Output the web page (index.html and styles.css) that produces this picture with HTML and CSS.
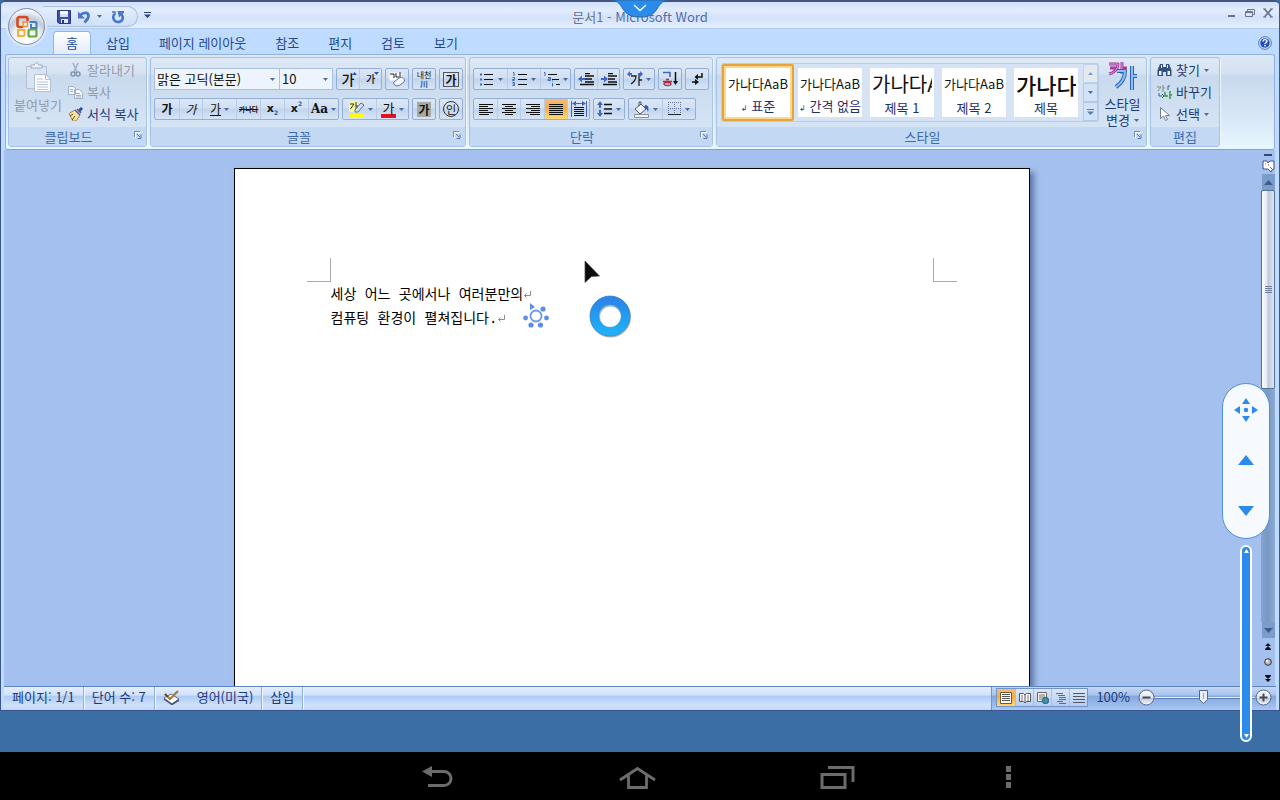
FILE: index.html
```html
<!DOCTYPE html>
<html lang="ko">
<head>
<meta charset="utf-8">
<title>문서1 - Microsoft Word</title>
<link rel="stylesheet" href="styles.css">
</head>
<body>
<svg class="defs" aria-hidden="true">
  <defs>
    <symbol id="caret" viewBox="0 0 5 3"><path d="M0 0h5L2.5 3z" fill="#4a6ca3"/></symbol>
    <symbol id="launch" viewBox="0 0 8 8"><path d="M.5 6V.5H6" fill="none" stroke="#6b8cbd"/><path d="M3 3l3 3M7 3.500v4H3.500" fill="none" stroke="#5577aa"/><path d="M1.500 7V1.500H7" fill="none" stroke="#fff"/></symbol>
    <linearGradient id="steel" x1="0" y1="0" x2="0" y2="1"><stop offset="0" stop-color="#fff"/><stop offset=".5" stop-color="#dfe4ee"/><stop offset=".55" stop-color="#bfc8da"/><stop offset="1" stop-color="#f8fbff"/></linearGradient>
    <linearGradient id="sky" x1="0" y1="0" x2="0" y2="1"><stop offset="0" stop-color="#2a86ea"/><stop offset="1" stop-color="#1fb0f8"/></linearGradient>
  </defs>
</svg>

<div class="window">
  <header class="titlebar">
    <div class="title-left">
      <div class="quick">
        <button class="plain" aria-label="저장"><svg width="14" height="14" viewBox="0 0 14 14"><path d="M.5.500h13v13H2l-1.500-1.500z" fill="#3f4fa8" stroke="#2b3585"/><path d="M3 1h8v6H3z" fill="#f4f8ff"/><path d="M3 4h8v3H3z" fill="#cfe0f8"/><path d="M4 9h7v4H4z" fill="#e4e8f4"/><path d="M5 10h2v3H5z" fill="#2b3585"/></svg></button>
        <button class="plain" aria-label="실행 취소"><svg width="14" height="14" viewBox="0 0 14 14"><path d="M3.500 5C7 1.500 12 2.500 11.500 6.500c-.3 2.500-2 4-4 6" fill="none" stroke="#4a76cc" stroke-width="2.800"/><path d="M1 1.500v7h7z" fill="#4a76cc"/></svg></button>
        <button class="plain undo-list" aria-label="실행 취소 목록"><svg class="caret"><use href="#caret"/></svg></button>
        <button class="plain" aria-label="다시 실행"><svg width="14" height="14" viewBox="0 0 14 14"><path d="M3.500 4C1 7 2.500 12 7 12s6-4.500 3.500-7.500" fill="none" stroke="#4a76cc" stroke-width="2.600"/><path d="M6.500 1H13v1.500L8 7.500z" fill="#4a76cc"/><path d="M1 2h3v3" fill="none" stroke="#4a76cc" stroke-width="1.500"/></svg></button>
      </div>
      <button class="plain" aria-label="빠른 실행 도구 모음 사용자 지정"><svg width="7" height="6" viewBox="0 0 7 6"><path d="M0 0h7v1H0zM0 2.500h7L3.500 6z" fill="#28457d"/></svg></button>
    </div>
    <h1 class="title">문서1 - <span>Microsoft Word</span></h1>
    <div class="title-right">
      <button class="plain" aria-label="최소화"><svg width="10" height="10" viewBox="0 0 10 10"><path d="M1 7h7v2H1z" fill="#68758c"/></svg></button>
      <button class="plain" aria-label="이전 크기로"><svg width="10" height="10" viewBox="0 0 10 10"><path d="M2.500 3V1.500h7v5H8M.5 3.500h7v5h-7zM.5 4.500h7" fill="none" stroke="#68758c"/></svg></button>
      <button class="plain" aria-label="닫기"><svg width="10" height="10" viewBox="0 0 10 10"><path d="M1.500 1l7 8M8.500 1l-7 8" stroke="#68758c" stroke-width="1.800"/><path d="M0 1h3M7 1h3M0 9h3M7 9h3" stroke="#68758c"/></svg></button>
    </div>
  </header>
  <button class="office" aria-label="Office 단추"><svg width="24" height="24" viewBox="0 0 24 24" fill="none" stroke-width="2.600"><path d="M12.500 6V4a2 2 0 0 0-2-2H4.500a2 2 0 0 0-2 2v6a2 2 0 0 0 2 2H8" stroke="#d9481c"/><path d="M8 7h4.500v4.500H8z" stroke="#f0913a" stroke-width="1.500"/><path d="M14.500 7H20a1.500 1.500 0 0 1 1.500 1.500V13H16V9" stroke="#3b7ec8" stroke-width="2"/><path d="M9 15H3v6h5a1.500 1.500 0 0 0 1.500-1.500V14" stroke="#f2b233" stroke-width="2"/><rect x="13.500" y="14.500" width="8" height="7" rx="1.500" stroke="#69a93c" stroke-width="2.200"/></svg></button>

  <nav class="tabs" aria-label="리본 탭">
    <button class="tab active">홈</button>
    <button class="tab">삽입</button>
    <button class="tab">페이지 레이아웃</button>
    <button class="tab">참조</button>
    <button class="tab">편지</button>
    <button class="tab">검토</button>
    <button class="tab">보기</button>
    <button class="plain help" aria-label="도움말"><svg width="14" height="14" viewBox="0 0 14 14"><circle cx="7" cy="7" r="6.300" fill="#e8f2ff" stroke="#4a6eb8"/><circle cx="7" cy="7" r="4.800" fill="#2350c0"/><path d="M5 5.500C5 3 9 3 9 5.300 9 6.500 7 6.500 7 8.200M7 9v1.600" fill="none" stroke="#fff" stroke-width="1.400"/></svg></button>
  </nav>

  <div class="ribbon">
    <section class="group clipboard">
      <div class="body">
        <button class="paste off"><svg width="28" height="31" viewBox="0 0 28 31"><path d="M2.500 4.500h20v22h-20z" fill="#d9e3f1" stroke="#b4c1d4"/><path d="M7 6V3h3.500c0-3 4-3 4 0H18v3z" fill="#eef3fa" stroke="#9eabc0"/><path d="M10.500 12.500h11l5 5v12h-16z" fill="#fafcff" stroke="#b4c1d4"/><path d="M21.500 12.500v5h5M13 20h11M13 22.500h11M13 25h11M13 27.500h11M13 17h6" fill="none" stroke="#b9c7da"/></svg><span>붙여넣기</span><svg class="caret faded"><use href="#caret"/></svg></button>
        <div class="stack">
          <button class="line off"><svg width="15" height="14" viewBox="0 0 15 14"><path d="M5 0l4 9M10 0L6 9" stroke="#9fb0c8" stroke-width="1.600"/><circle cx="5" cy="11" r="2" fill="none" stroke="#8294b4" stroke-width="1.500"/><circle cx="10" cy="11" r="2" fill="none" stroke="#8294b4" stroke-width="1.500"/></svg>잘라내기</button>
          <button class="line off"><svg width="15" height="14" viewBox="0 0 15 14"><path d="M.5 1.500h5l2 2v6h-7z M6.500 4.500h5l3 3v6h-8z" fill="#f6f9fd" stroke="#a1b0c6"/><path d="M2 4.500h3M2 6.500h3M8 8.500h4M8 10.500h5M8 12h5" stroke="#a1b0c6"/></svg>복사</button>
          <button class="line"><svg width="15" height="14" viewBox="0 0 15 14"><path d="M10 3l3-3 2 1.500-3 4z" fill="#274f9c"/><path d="M1 6.500L7 3l5 5-4 6H5z" fill="#f6e3a5" stroke="#b48a34"/><path d="M7 3l5 5M9 2l4 4" stroke="#5a5a8c" stroke-width="1.500"/><path d="M4 13l3-4M2 9l3-2" stroke="#5c4620"/></svg>서식 복사</button>
        </div>
      </div>
      <footer class="opts">클립보드<button class="launch" aria-label="클립보드 옵션"><svg width="8" height="8"><use href="#launch"/></svg></button></footer>
    </section>

    <section class="group font">
      <div class="body rows">
        <div class="row">
          <div class="combos">
            <label class="combo face"><select aria-label="글꼴"><option>맑은 고딕(본문)</option></select><svg class="caret"><use href="#caret"/></svg></label>
            <label class="combo size"><select aria-label="글꼴 크기"><option>10</option></select><svg class="caret"><use href="#caret"/></svg></label>
          </div>
          <div class="strip"><button class="w22" aria-label="글꼴 크게"><b class="ko14">가</b><svg class="tick" width="5" height="3" viewBox="0 0 5 3"><path d="M0 3h5L2.500 0z" fill="#2d57a5"/></svg></button><button class="w22" aria-label="글꼴 작게"><b class="ko10">가</b><svg class="tick" width="5" height="3" viewBox="0 0 5 3"><path d="M0 0h5L2.500 3z" fill="#2d57a5"/></svg></button></div>
          <div class="strip"><button class="w22" aria-label="서식 지우기"><svg width="18" height="18" viewBox="0 0 18 18"><path d="M1.500 2.500h12v8h-12z" fill="#fff"/><path d="M2 4h4v4M8 3v4h3M12 2v6" fill="none" stroke="#222"/><path d="M6 12l5-4c3-2 7 1 5 4l-4 3c-3 2-8 0-6-3z" fill="#f3f5ff" stroke="#6575a5"/></svg></button></div>
          <div class="strip"><button class="w22 ruby" aria-label="윗주 달기"><span>내천</span><b>川</b></button></div>
          <div class="strip"><button class="w22" aria-label="문자 테두리"><b class="boxed">가</b></button></div>
        </div>
        <div class="row">
          <div class="strip"><button class="w24" aria-label="굵게"><b class="ko12">가</b></button><button class="w23" aria-label="기울임꼴"><i class="ko12">가</i></button><button class="w34" aria-label="밑줄"><u class="ko12">가</u><svg class="caret"><use href="#caret"/></svg></button><button class="w24" aria-label="취소선"><s>가나다</s></button><button class="w24" aria-label="아래 첨자"><b class="math">x<sub>2</sub></b></button><button class="w24" aria-label="위 첨자"><b class="math">x<sup>2</sup></b></button><button class="w30" aria-label="대/소문자 바꾸기"><b class="case">Aa</b><svg class="caret"><use href="#caret"/></svg></button></div>
          <div class="strip"><button class="w33" aria-label="강조 색"><svg width="18" height="18" viewBox="0 0 18 18"><path d="M2 1h9v11H2z" fill="#f8f68c"/><path d="M3 4h4L3.500 9M9 2v8M9 6h2" fill="none" stroke="#333"/><path d="M8 10l6-7 3 2-6 7H8z" fill="#dae4f5" stroke="#5a6b96"/><path d="M2 14h15v4H2z" fill="#ffff00"/></svg><svg class="caret"><use href="#caret"/></svg></button><button class="w32" aria-label="글꼴 색"><span class="colored">가</span><svg class="caret"><use href="#caret"/></svg></button></div>
          <div class="strip"><button class="w22" aria-label="문자 음영"><b class="shaded">가</b></button></div>
          <div class="strip"><button class="w22" aria-label="원 문자"><span class="circled">인</span></button></div>
        </div>
      </div>
      <footer class="opts">글꼴<button class="launch" aria-label="글꼴 옵션"><svg width="8" height="8"><use href="#launch"/></svg></button></footer>
    </section>

    <section class="group para">
      <div class="body rows">
        <div class="row">
          <div class="strip"><button class="w33" aria-label="글머리 기호"><svg width="16" height="14" viewBox="0 0 16 14"><path d="M5 2.500h9M5 7.500h9M5 12.500h9" stroke="#111"/><path d="M1 1.500h2v2H1zM1 6.500h2v2H1zM1 11.500h2v2H1z" fill="#4267b4"/></svg><svg class="caret"><use href="#caret"/></svg></button><button class="w33" aria-label="번호 매기기"><svg width="16" height="14" viewBox="0 0 16 14"><path d="M6 2.500h9M6 7.500h9M6 12.500h9" stroke="#111"/><path d="M1 .500h1V4M.5 5.500h2v2h-2v1h2M.5 10.500h2v3h-2M.5 12h2" fill="none" stroke="#4267b4"/></svg><svg class="caret"><use href="#caret"/></svg></button><button class="w30" aria-label="다단계 목록"><svg width="17" height="15" viewBox="0 0 17 15"><path d="M5 2.500h9M9 7.500h7M13 12.500h4" stroke="#111"/><path d="M1 .500h1V4M5 5.500h2.500v3H5V7h2M9.500 11v3.500M9.500 8.500v1" fill="none" stroke="#4267b4"/></svg><svg class="caret"><use href="#caret"/></svg></button></div>
          <div class="strip"><button class="w22" aria-label="내어쓰기"><svg width="16" height="13" viewBox="0 0 16 13"><path d="M7 .500h5M7 3h9M7 6h7M7 9h9M2 11.500h14" stroke="#111" stroke-width="1.600"/><path d="M0 6l4-3.500V5h3v2H4v2.500z" fill="#3f68c8"/></svg></button><button class="w22" aria-label="들여쓰기"><svg width="16" height="13" viewBox="0 0 16 13"><path d="M7 .500h5M7 3h9M7 6h7M7 9h9M2 11.500h14" stroke="#111" stroke-width="1.600"/><path d="M7 6L3 2.500V5H0v2h3v2.500z" fill="#3f68c8"/></svg></button></div>
          <div class="strip"><button class="w30" aria-label="문자 배열"><svg width="16" height="16" viewBox="0 0 16 16"><path d="M4 5h5c0 3-2 6-5 8M12 3v12M12 9h3" fill="none" stroke="#222" stroke-width="1.300"/><path d="M0 3l3-3v2h2v2H3v2zM16 3l-3-3v2h-2v2h2v2z" fill="#3f68c8"/></svg><svg class="caret"><use href="#caret"/></svg></button></div>
          <div class="strip"><button class="w22" aria-label="정렬"><svg width="17" height="16" viewBox="0 0 17 16"><path d="M1 1.500h7V6" fill="none" stroke="#4267b4" stroke-width="1.600"/><path d="M4 8.500h3M1 10.500h9" stroke="#b02a38" stroke-width="1.500"/><ellipse cx="5.500" cy="13" rx="3.500" ry="1.500" fill="none" stroke="#b02a38" stroke-width="1.300"/><path d="M13.500 1v11" stroke="#111" stroke-width="1.500"/><path d="M11 10h5l-2.500 4z" fill="#111"/></svg></button></div>
          <div class="strip"><button class="w22" aria-label="편집 기호 표시"><svg width="13" height="14" viewBox="0 0 13 14"><path d="M11 1v4H6M1 10h4" fill="none" stroke="#111" stroke-width="1.500"/><path d="M7 2v6L3.500 5zM4 7v6l4-3z" fill="#111"/></svg></button></div>
        </div>
        <div class="row">
          <div class="strip"><button class="w23" aria-label="왼쪽 맞춤"><svg width="14" height="11" viewBox="0 0 14 11"><path d="M0 .500h14M0 2.500h9M0 4.500h14M0 6.500h9M0 8.500h14M0 10.500h10" stroke="#111"/></svg></button><button class="w23" aria-label="가운데 맞춤"><svg width="14" height="11" viewBox="0 0 14 11"><path d="M0 .500h14M3 2.500h8M0 4.500h14M3 6.500h8M0 8.500h14M3 10.500h8" stroke="#111"/></svg></button><button class="w24" aria-label="오른쪽 맞춤"><svg width="14" height="11" viewBox="0 0 14 11"><path d="M0 .500h14M5 2.500h9M0 4.500h14M5 6.500h9M0 8.500h14M4 10.500h10" stroke="#111"/></svg></button><button class="w23 on" aria-label="양쪽 맞춤"><svg width="14" height="11" viewBox="0 0 14 11"><path d="M0 .500h14M0 2.500h14M0 4.500h14M0 6.500h14M0 8.500h14M0 10.500h14" stroke="#111"/></svg></button><button class="w22" aria-label="균등 분할"><svg width="16" height="16" viewBox="0 0 16 16"><path d="M3 6.500h10M3 8.500h10M3 10.500h10M3 12.500h10M3 14.500h10" stroke="#111"/><path d="M.5 0v16M15.500 0v16M4 2.500h8" stroke="#4267b4"/><path d="M1 2.500l4-2.500v5zM15 2.500l-4-2.500v5z" fill="#4267b4"/></svg></button></div>
          <div class="strip"><button class="w30" aria-label="줄 간격"><svg width="16" height="16" viewBox="0 0 16 16"><path d="M7 3.500h8M7 8h8M7 12.500h8" stroke="#111" stroke-width="1.300"/><path d="M3 0l3 4H4v3H2V4H0zM3 16l3-4H4V9H2v3H0z" fill="#4267b4"/></svg><svg class="caret"><use href="#caret"/></svg></button></div>
          <div class="strip"><button class="w33" aria-label="음영"><svg width="17" height="17" viewBox="0 0 17 17"><path d="M2 8l6-5 5 5-6 5z" fill="#eef4fc" stroke="#4a5878"/><path d="M6 5V1h2v3" fill="none" stroke="#4a5878"/><path d="M12 4c4 0 4 4 3 7-1-3-2-4-4-4z" fill="#2f5cb8"/><path d="M1.500 13.500h14v3h-14z" fill="#f5f7fc" stroke="#8a8f9c"/></svg><svg class="caret"><use href="#caret"/></svg></button><button class="w33" aria-label="테두리"><svg width="14" height="14" viewBox="0 0 14 14"><path d="M.5 0v13M6.500 0v13M12.500 0v13M0 .500h13M0 6.500h13" stroke="#66759a" stroke-dasharray="1 1"/><path d="M0 12.500h13" stroke="#222"/></svg><svg class="caret"><use href="#caret"/></svg></button></div>
        </div>
      </div>
      <footer class="opts">단락<button class="launch" aria-label="단락 옵션"><svg width="8" height="8"><use href="#launch"/></svg></button></footer>
    </section>

    <section class="group styles">
      <div class="body">
        <div class="gallery">
          <button class="style sel"><span class="sample">가나다AaBb</span><span class="name"><small>↲</small> 표준</span></button>
          <button class="style"><span class="sample">가나다AaBb</span><span class="name"><small>↲</small> 간격 없음</span></button>
          <button class="style"><span class="sample big">가나다A</span><span class="name">제목 1</span></button>
          <button class="style"><span class="sample">가나다AaBb</span><span class="name">제목 2</span></button>
          <button class="style"><span class="sample heavy">가나다</span><span class="name">제목</span></button>
          <div class="scroller">
            <button class="dim" aria-label="위로"><svg class="caret flip"><use href="#caret"/></svg></button>
            <button aria-label="아래로"><svg class="caret"><use href="#caret"/></svg></button>
            <button aria-label="자세히"><svg width="7" height="6" viewBox="0 0 7 6"><path d="M0 0h7v1H0zM0 2.500h7L3.500 6z" fill="#5b7cad"/></svg></button>
          </div>
        </div>
        <button class="change"><svg width="32" height="32" viewBox="0 0 32 32" fill="none" stroke-linejoin="round"><path d="M2 4h9c0 5-4 9-9 10M3 8h7M15 2v12M15 8h5" stroke="#a63a9e" stroke-width="3"/><path d="M2 4h9c0 5-4 9-9 10M15 2v12" stroke="#dd9ae0" stroke-width="1"/><path d="M10 11h8c0 7-3 12-9 16M25 6v24M25 16h5" stroke="#2b62b8" stroke-width="4"/><path d="M10 11h8c0 7-3 12-9 16M25 6v24M25 16h5" stroke="#8cc0f5" stroke-width="2"/></svg><span>스타일</span><span>변경 <svg class="caret"><use href="#caret"/></svg></span></button>
      </div>
      <footer class="opts">스타일<button class="launch" aria-label="스타일 옵션"><svg width="8" height="8"><use href="#launch"/></svg></button></footer>
    </section>

    <section class="group edit">
      <div class="body">
        <div class="stack">
          <button class="line"><svg width="15" height="14" viewBox="0 0 15 14"><path d="M3 1h3v3h3V1h3l2.500 6v6H9V9H6v4H.5V7z" fill="#34507e"/><path d="M2 8h2.500v4H2zM10.500 8H13v4h-2.500zM4 2h1v3H4zM10 2h1v3h-1z" fill="#e6effb"/></svg>찾기<svg class="caret"><use href="#caret"/></svg></button>
          <button class="line"><svg width="15" height="14" viewBox="0 0 15 14" fill="none"><path d="M0 2h4L1 6M6 0v7M6 3h2" stroke="#888"/><path d="M2 8v3h3M5 9l2 2-2 2M13 1h-2v4" stroke="#3a5da0"/><path d="M8 7v4h3M13 6v8M13 10h2" stroke="#3a9a48" stroke-width="1.500"/></svg>바꾸기</button>
          <button class="line"><svg width="15" height="14" viewBox="0 0 15 14"><path d="M3.500.500v11l3-2.500 2 4.500 2-1-2-4h4z" fill="#fff" stroke="#6d7d98"/></svg>선택<svg class="caret"><use href="#caret"/></svg></button>
        </div>
      </div>
      <footer>편집</footer>
    </section>
  </div>

  <main class="workspace">
    <div class="canvas">
      <article class="page">
        <div class="marks"><span class="mark"></span><span class="mark right"></span></div>
        <p>세상 어느 곳에서나 여러분만의<svg width="8" height="8" viewBox="0 0 8 8"><path d="M7.500 0v4.500H2M3.500 2.500l-2 2 2 2" fill="none" stroke="#8a8a8a"/></svg></p>
        <p>컴퓨팅 환경이 펼쳐집니다.<svg width="8" height="8" viewBox="0 0 8 8"><path d="M7.500 0v4.500H2M3.500 2.500l-2 2 2 2" fill="none" stroke="#8a8a8a"/></svg></p>
      </article>
    </div>
    <div class="scrollbar">
      <span class="split"></span>
      <button class="plain ruler" aria-label="눈금자"><svg width="13" height="13" viewBox="0 0 13 13"><path d="M1 1h4l1 2 2-2h4v8l-2 1-1 2-3-3H1z" fill="#fff" stroke="#46557c"/><path d="M3 4h1M6 5h1M8 7l2 2" stroke="#b04a7a"/></svg></button>
      <button class="arrow" aria-label="위로 스크롤"><svg width="9" height="5" viewBox="0 0 9 5"><path d="M0 5h9L4.500 0z" fill="#3d5c8e"/></svg></button>
      <div class="track"><div class="thumb"><i></i><i></i><i></i><i></i></div></div>
      <button class="arrow" aria-label="아래로 스크롤"><svg width="9" height="5" viewBox="0 0 9 5"><path d="M0 0h9L4.500 5z" fill="#3d5c8e"/></svg></button>
      <div class="browse">
        <button class="plain" aria-label="이전 페이지"><svg width="6" height="7" viewBox="0 0 6 7"><path d="M3 0l3 3H0zM3 3l3 3H0zM0 6h6v1H0z" fill="#111"/></svg></button>
        <button class="plain" aria-label="개체 선택"><svg width="8" height="8" viewBox="0 0 8 8"><circle cx="4" cy="4" r="3.300" fill="#b9bcc0" stroke="#333"/><circle cx="3" cy="3" r="1.200" fill="#fff"/></svg></button>
        <button class="plain" aria-label="다음 페이지"><svg width="6" height="7" viewBox="0 0 6 7"><path d="M3 7l3-3H0zM3 4l3-3H0zM0 0h6v1H0z" fill="#111"/></svg></button>
      </div>
    </div>
  </main>

  <footer class="status">
    <span class="cell">페이지: 1/1</span>
    <span class="cell">단어 수: 7</span>
    <span class="cell wide"><svg width="17" height="15" viewBox="0 0 17 15"><path d="M1 8l7-4 8 5-7 5z" fill="#fff" stroke="#5a6a8e"/><path d="M1 9l8 5.500L16 10" fill="none" stroke="#44547c" stroke-width="1.500"/><path d="M2 4l5 5L15 1" fill="none" stroke="#ac7b32" stroke-width="2.200"/><path d="M2 4l3 3" stroke="#444" stroke-width="1.500"/></svg>영어(미국)</span>
    <span class="cell">삽입</span>
    <div class="zoom">
      <div class="views">
        <button class="on" aria-label="인쇄 모양"><svg width="12" height="12" viewBox="0 0 12 12"><path d="M.5.500h11v11H.5z" fill="#fff" stroke="#6b5a3a"/><path d="M2 2.500h8M2 4.500h8M2 6.500h8M2 8.500h8" stroke="#555"/></svg></button>
        <button aria-label="전체 화면 읽기"><svg width="12" height="12" viewBox="0 0 12 12"><path d="M.5 1.500h4L6 3l1.500-1.500h4v8h-4L6 11 4.500 9.500h-4zM6 3v8" fill="#fff" stroke="#555"/><path d="M2 4h2M2 6h2M8 4h2M8 6h2M2 8h2M8 8h2" stroke="#777"/></svg></button>
        <button aria-label="웹 모양"><svg width="12" height="12" viewBox="0 0 12 12"><path d="M.5.500h9v9h-9z" fill="#fff" stroke="#666"/><path d="M2 3h6M2 5h6M2 7h3" stroke="#666"/><circle cx="8.500" cy="8.500" r="3.200" fill="#3c93a0" stroke="#2b5a7c"/></svg></button>
        <button aria-label="개요"><svg width="12" height="12" viewBox="0 0 12 12"><path d="M1 1.500h7M3 3.500h7M4 5.500h7M4 7.500h7M2 9.500h6M4 11.500h7" stroke="#667"/></svg></button>
        <button aria-label="초안"><svg width="12" height="12" viewBox="0 0 12 12"><path d="M0 1.500h12M0 4.500h12M0 7.500h12M0 10.500h12" stroke="#556"/></svg></button>
      </div>
      <span class="percent">100%</span>
      <button class="plain" aria-label="축소"><svg width="17" height="17" viewBox="0 0 17 17"><circle cx="8.500" cy="8.500" r="7.500" fill="url(#steel)" stroke="#54668c"/><path d="M4.500 8.500h8" stroke="#444b5c" stroke-width="2"/></svg></button>
      <input class="range" type="range" min="10" max="190" value="98" aria-label="확대/축소">
      <button class="plain" aria-label="확대"><svg width="17" height="17" viewBox="0 0 17 17"><circle cx="8.500" cy="8.500" r="7.500" fill="url(#steel)" stroke="#54668c"/><path d="M4.500 8.500h8M8.500 4.500v8" stroke="#444b5c" stroke-width="2"/></svg></button>
    </div>
  </footer>
</div>

<div class="desktop"></div>

<nav class="system" aria-label="시스템">
  <button class="plain back" aria-label="뒤로"><svg width="34" height="24" viewBox="0 0 34 24"><path d="M8 6.500h14a7 7 0 0 1 0 14H6" fill="none" stroke="#6c6c6c" stroke-width="3"/><path d="M0 6.500L10 1v11z" fill="#6c6c6c"/></svg></button>
  <button class="plain home" aria-label="홈 화면"><svg width="40" height="25" viewBox="0 0 40 25"><path d="M10.500 10v12.500h18V10M2 15L19.500 3.500 37 15" fill="none" stroke="#6c6c6c" stroke-width="2.800"/></svg></button>
  <button class="plain recent" aria-label="최근 앱"><svg width="36" height="25" viewBox="0 0 36 25"><path d="M2 9.500h23v13H2zM8 2.500h25V17" fill="none" stroke="#6c6c6c" stroke-width="3"/></svg></button>
  <button class="plain more" aria-label="메뉴"><svg width="5" height="22" viewBox="0 0 5 22"><path d="M0 0h5v6H0zM0 8h5v6H0zM0 16h5v6H0z" fill="#6c6c6c"/></svg></button>
</nav>

<button class="plain pull" aria-label="메뉴 펼치기"><svg width="56" height="18" viewBox="0 0 56 18"><path d="M0 0h56c-6 1-8 4-11 9-4 6-8 8-17 8s-13-2-17-8C8 4 6 1 0 0z" fill="#2b8bea" stroke="#2c66a8"/><path d="M22 5l6 5.500L34 5" fill="none" stroke="#fff" stroke-width="1.300"/></svg></button>
<svg class="pointer" width="17" height="24" viewBox="0 0 17 24"><path d="M1 1l14.500 15-8 .500L1 22.500z" fill="#0c0c0c" stroke="#444" stroke-width=".7"/></svg>
<svg class="ring" width="43" height="43" viewBox="0 0 43 43"><circle cx="21.500" cy="22" r="15.500" fill="none" stroke="#a8b4c0" stroke-width="10"/><circle cx="21" cy="21" r="15.500" fill="none" stroke="url(#sky)" stroke-width="9"/><circle cx="21" cy="21" r="20" fill="none" stroke="#3a86d0" stroke-width=".8"/></svg>
<svg class="sun" width="26" height="26" viewBox="0 0 26 26" fill="#5b8ee6"><circle cx="13" cy="13" r="5.500" fill="none" stroke="#6a97ea" stroke-width="1.800"/><path d="M7 0l5 4-5 3z"/><circle cx="20" cy="6" r="2.600"/><circle cx="23.500" cy="15" r="2.400"/><circle cx="17.500" cy="22" r="2.600"/><circle cx="8" cy="22" r="2.600"/><circle cx="2.600" cy="15" r="2.400"/></svg>
<div class="pad">
  <button class="plain" aria-label="이동"><svg width="24" height="24" viewBox="0 0 24 24" fill="#2b8bea"><path d="M12 0l4 6H8zM12 24l4-6H8zM0 12l6-4v8zM24 12l-6-4v8z"/><circle cx="12" cy="12" r="2.200"/></svg></button>
  <button class="plain" aria-label="위"><svg width="16" height="10" viewBox="0 0 16 10"><path d="M0 10h16L8 0z" fill="#2b8bea"/></svg></button>
  <button class="plain" aria-label="아래"><svg width="16" height="10" viewBox="0 0 16 10"><path d="M0 0h16L8 10z" fill="#2b8bea"/></svg></button>
</div>
<div class="slide"><svg width="5" height="4" viewBox="0 0 5 4"><path d="M0 4h5L2.500 0z" fill="#fff"/></svg><svg width="5" height="4" viewBox="0 0 5 4"><path d="M0 0h5L2.500 4z" fill="#fff"/></svg></div>
</body>
</html>
```

FILE: styles.css
```css
* { box-sizing: border-box; }

body {
  margin: 0;
  min-height: 100vh;
  height: 100vh;
  display: flex;
  flex-direction: column;
  overflow: hidden;
  position: relative;
  background: #3a6ea5;
  font-family: "Noto Sans CJK KR", sans-serif;
  font-size: 13px;
  line-height: 16px;
  color: #1d3a78;
}

button {
  font: inherit;
  color: inherit;
  background: none;
  border: 0;
  padding: 0;
  margin: 0;
  display: flex;
  align-items: center;
  justify-content: center;
}

svg { display: block; flex: none; }
.defs { position: absolute; width: 0; height: 0; }
.caret { width: 5px; height: 3px; }
.flip { transform: rotate(180deg); }
.faded { opacity: .4; }

/* Window frame */
.window {
  flex: 1;
  min-height: 0;
  display: flex;
  flex-direction: column;
  position: relative;
  background: #bfdbff;
  border: 1px solid #3c5590;
  border-top: 2px solid #47537f;
  border-radius: 6px 6px 0 0;
}

.titlebar {
  height: 27px;
  display: grid;
  grid-template-columns: 1fr auto 1fr;
  align-items: center;
  background: linear-gradient(#cfdffa, #e2ecfd 30%, #d3e2fa 60%, #e4efff);
  border-bottom: 1px solid #b3cbee;
  border-radius: 4px 4px 0 0;
}

.title-left, .title-right { display: flex; align-items: center; }
.title-left { padding-left: 42px; gap: 6px; align-self: stretch; }
.title-right { justify-content: flex-end; gap: 8px; padding: 0 6px 4px 0; }
.title { margin: 0; padding-top: 4px; font-size: 13px; font-weight: 400; color: #69758c; }
.title span { color: #4a6fae; }

.quick {
  display: flex;
  align-items: center;
  gap: 6px;
  height: 21px;
  margin-top: 3px;
  padding: 0 12px 0 14px;
  border: 1px solid #a9bfe2;
  border-left: 0;
  border-radius: 0 11px 11px 0;
  background: linear-gradient(#e7effc, #cddff8);
}
.undo-list { padding-right: 3px; }

.office {
  position: absolute;
  left: 7px;
  top: 6px;
  width: 37px;
  height: 37px;
  border-radius: 50%;
  border: 1px solid #7d8fae;
  background: radial-gradient(circle at 50% 85%, #fff, #eef1f6 40%, #c3cbd9 60%, #f2f5fa 80%);
  box-shadow: 0 0 0 2px #dce8fa;
}

.tabs { display: flex; align-items: stretch; gap: 1px; height: 25px; padding: 2px 7px 0 52px; }
.tab { padding: 0 14px; color: #1f4a91; }
.tab.active {
  padding: 0 12px;
  background: linear-gradient(#fff, #e2ecf9);
  border: solid #94b6e4;
  border-width: 1px 1px 0;
  border-radius: 4px 4px 0 0;
}
.help { margin-left: auto; }

/* Ribbon */
.ribbon {
  display: flex;
  gap: 3px;
  margin: 0 4px;
  padding: 2px;
  height: 96px;
  border: 1px solid #8fb2e2;
  border-bottom-color: #79a8d8;
  border-radius: 3px;
  background: linear-gradient(#dde8f5, #d3e0f1 20%, #c8d8ed 22%, #dcebf9 75%, #e8f8ff);
}

.group {
  display: flex;
  flex-direction: column;
  border: 1px solid #a6c2e6;
  border-radius: 3px;
  background: linear-gradient(#dfe9f6, #d5e2f2 18%, #c9daee 20%, #d9e7f7);
  box-shadow: 1px 1px 0 #eff7ff;
}
.group .body { flex: 1; display: flex; min-height: 0; }
.group > footer {
  height: 19px;
  padding-top: 2px;
  text-align: center;
  color: #3e6aaa;
  background: #c2d8f3;
  position: relative;
}
.group > .opts { padding-right: 18px; }
.launch { position: absolute; right: 4px; top: 4px; }

.clipboard { width: 139px; }
.font { width: 316px; }
.para { width: 244px; }
.styles { width: 431px; }
.edit { width: 70px; }

.off { color: #8f9bae; }
.paste { width: 54px; flex-direction: column; justify-content: flex-start; gap: 3px; padding: 4px 0 0 4px; white-space: nowrap; }
.paste span { line-height: 18px; }
.stack { display: flex; flex-direction: column; padding-top: 1px; margin-left: 5px; }
.line { height: 22px; gap: 4px; justify-content: flex-start; white-space: nowrap; }

.group .rows { flex-direction: column; gap: 8px; padding: 10px 3px 0; }
.row { display: flex; gap: 3px; height: 22px; }
.strip {
  display: flex;
  border: 1px solid #94aed4;
  border-radius: 2px;
  background: linear-gradient(#dce7f6, #d0dff2 45%, #c1d4ec 50%, #d5e5f8);
}
.strip button { gap: 3px; color: #111; position: relative; }
.strip button + button { border-left: 1px solid #b9cce6; }
.strip .on, .views .on { background: linear-gradient(#f3bd79, #f6ad45 45%, #ffd972); }
.w22 { width: 22px; }
.w23 { width: 23px; }
.w24 { width: 24px; }
.w30 { width: 30px; }
.w32 { width: 32px; }
.w33 { width: 33px; }
.w34 { width: 34px; }

.combos { display: flex; }
.combo { position: relative; border: 1px solid #a9c0e2; background: #edf4fd; display: flex; align-items: center; }
.combo + .combo { border-left: 0; }
.combo select {
  appearance: none;
  width: 100%;
  height: 20px;
  border: 0;
  padding: 0 2px;
  font: inherit;
  color: #111;
  background: none;
}
.combo .caret { position: absolute; right: 4px; top: 9px; }
.face { width: 126px; }
.size { width: 53px; }

.tick { position: absolute; right: 2px; top: 3px; }
.ko14 { font-size: 14px; font-weight: 500; }
.ko12 { font-size: 12px; }
.ko10 { font-size: 10px; font-weight: 500; }
.strip s { font-size: 7px; font-weight: 700; }
.math { font-family: "DejaVu Sans", sans-serif; font-size: 11px; }
.math sub, .math sup { font-size: 6px; line-height: 0; color: #2d57a5; }
.math sub { vertical-align: -3px; }
.math sup { vertical-align: 6px; }
.case { font-family: "DejaVu Serif", serif; font-size: 12px; }
.ruby { flex-direction: column; font-size: 8px; line-height: 9px; }
.strip .ruby { gap: 0; }
.ruby b { color: #2d57a5; }
.boxed { border: 1px solid #555; font-size: 12px; line-height: 13px; padding: 0 1px; }
.colored { font-size: 13px; line-height: 13px; border-bottom: 4px solid #e8111b; padding: 0 2px; }
.shaded { background: #a9a9a4; font-size: 12px; line-height: 15px; padding: 0 1px; }
.circled { border: 1px solid #333; border-radius: 50%; width: 16px; height: 16px; font-size: 11px; line-height: 14px; }

.gallery { display: flex; align-self: flex-start; margin: 5px 0 0 4px; height: 59px; width: 378px; background: #d5e3f5; border: 1px solid #b7cde9; border-radius: 3px; }
.style { width: 72px; flex-direction: column; border: 4px solid transparent; background: #fff content-box; color: #1f2f66; justify-content: flex-start; }
.style.sel { border: 2px solid #e8a33c; border-radius: 2px; box-shadow: inset 0 0 0 2px #fbd88a; background: #fff; padding: 2px; }
.sample { width: 60px; height: 32px; overflow: hidden; white-space: nowrap; color: #111; font-size: 13px; line-height: 32px; text-align: left; }
.big { font-size: 20px; }
.heavy { font-weight: 500; font-size: 22px; }
.name { white-space: nowrap; line-height: 16px; }
.name small { font-family: "DejaVu Sans", sans-serif; font-size: 8px; }
.scroller { display: flex; flex-direction: column; width: 15px; margin-left: auto; }
.scroller button { flex: 1; border: 1px solid #b2c9e8; background: #d2e3f8; }
.scroller .dim { opacity: .6; background: #eee; }
.change { flex: 1; flex-direction: column; justify-content: flex-start; padding-top: 2px; white-space: nowrap; }
.change span { line-height: 16px; display: flex; align-items: center; gap: 4px; }
.change svg + span { padding-top: 4px; }
.edit .stack { margin-left: 6px; }

/* Document */
.workspace { flex: 1; min-height: 0; display: flex; margin: 0 4px 0 3px; background: #a4c0ee; }
.canvas { flex: 1; display: flex; justify-content: center; align-items: stretch; padding: 18px 2px 0 0; overflow: hidden; }
.page {
  width: 796px;
  max-width: 100%;
  padding-top: 89px;
  background: #fff;
  border: 1px solid #000;
  border-bottom: 0;
  box-shadow: 4px 4px 6px #5a76a8;
}
.marks { display: flex; justify-content: space-between; padding: 0 72px 1px; }
.mark { width: 24px; height: 24px; border: solid #aaa; border-width: 0 1px 1px 0; }
.mark.right { border-width: 0 0 1px 1px; }
.page p {
  margin: 0;
  padding-left: 96px;
  display: flex;
  align-items: center;
  font-family: "Liberation Mono", "Noto Sans CJK KR", monospace;
  font-size: 14px;
  line-height: 24px;
  color: #000;
}

.scrollbar { width: 14px; display: flex; flex-direction: column; align-items: center; padding-top: 4px; }
.split { width: 8px; height: 2px; background: #35476f; }
.ruler { height: 18px; padding-top: 2px; }
.arrow { width: 13px; height: 16px; background: #7c9cca; }
.track { flex: 1; align-self: stretch; background: linear-gradient(90deg, #85a3d0, #7899c4 50%, #8facd6); }
.thumb {
  height: 46%;
  border: 1px solid #5b7096;
  border-radius: 2px;
  background: linear-gradient(90deg, #fdfefe, #e4e9f2 40%, #bcc7db 50%, #dfe6f2);
  display: flex;
  flex-direction: column;
  align-items: center;
  justify-content: center;
  gap: 1px;
}
.thumb i { width: 7px; height: 1px; background: #6c7c9c; }
.browse { display: flex; flex-direction: column; justify-content: space-around; height: 48px; }
.browse button { min-height: 12px; }

/* Status bar */
.status {
  height: 24px;
  display: flex;
  align-items: stretch;
  margin: 0 3px;
  border-top: 1px solid #5f83bd;
  background: linear-gradient(#e3eefe, #d2e2fb 35%, #aecbf4 40%, #cfe1fb 80%, #c3d8f6);
}
.cell { display: flex; align-items: center; padding: 0 8px 3px; border-right: 1px solid #8db2e3; box-shadow: 1px 0 0 #f0f6ff; }
.wide { gap: 17px; }
.zoom {
  margin-left: auto;
  display: flex;
  align-items: center;
  padding: 0 4px 2px;
  border-left: 1px solid #7394ca;
  background: linear-gradient(#c5d8f6, #a9c4ee 35%, #83a7de 40%, #a9c7f2);
}
.views { display: flex; border: 1px solid #7395cb; background: linear-gradient(#dbe7f9, #b4ccef); }
.views button { width: 18px; height: 17px; }
.views button + button { border-left: 1px solid #a9c0e4; }
.percent { padding: 0 8px 2px; }
.range { appearance: none; width: 100px; height: 17px; margin: 0; background: none; }
.range::-webkit-slider-runnable-track { height: 17px; background: linear-gradient(#0000 8px, #e5eefc 8px, #e5eefc 9px, #5b7db6 9px, #5b7db6 10px, #0000 10px); }
.range::-webkit-slider-thumb {
  appearance: none;
  width: 9px;
  height: 14px;
  margin-top: 1px;
  background: url("data:image/svg+xml,%3Csvg xmlns='http://www.w3.org/2000/svg' viewBox='0 0 9 14'%3E%3Cpath d='M.5.500h8v9l-4 4-4-4z' fill='%23e8eef8' stroke='%2354668c'/%3E%3Cpath d='M4.500 3v6' stroke='%2398a5be'/%3E%3C/svg%3E");
}

.desktop { height: 41px; }

.system { height: 48px; background: #000; display: flex; align-items: center; justify-content: space-between; padding: 2px 21% 0 33%; }
.more { margin-left: -12px; }

/* Remote control overlays */
.pull { position: absolute; top: 0; left: 50%; margin-left: -28px; }
.pointer { position: absolute; left: 584px; top: 260px; }
.ring { position: absolute; left: 589px; top: 295px; }
.sun { position: absolute; left: 523px; top: 303px; }
.pad {
  position: absolute;
  right: 10px;
  top: 383px;
  width: 48px;
  height: 156px;
  padding: 14px 0 22px;
  display: flex;
  flex-direction: column;
  align-items: center;
  justify-content: space-between;
  border: 1px solid #4f8fdc;
  border-radius: 24px;
  background: #f6f9fe;
}
.pad button:first-child { margin-bottom: -9px; }
.slide {
  position: absolute;
  right: 28px;
  top: 545px;
  width: 12px;
  height: 197px;
  padding: 2px 0;
  display: flex;
  flex-direction: column;
  align-items: center;
  justify-content: space-between;
  border: 2px solid #fff;
  border-radius: 6px;
  background: #2b8bea;
}
```
